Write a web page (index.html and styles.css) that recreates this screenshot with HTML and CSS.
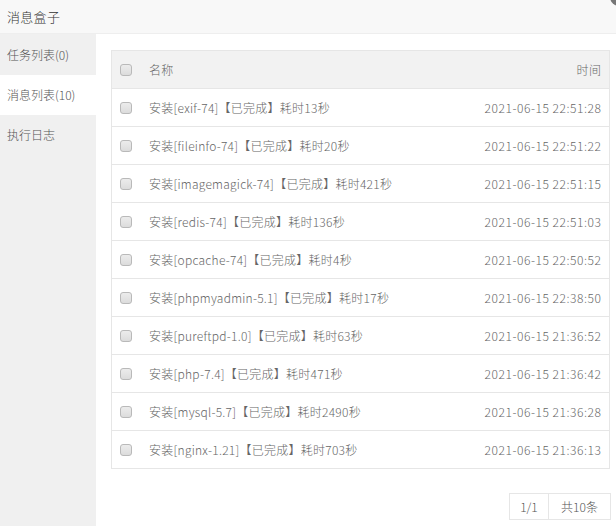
FILE: index.html
```html
<!DOCTYPE html>
<html lang="zh-CN">
<head>
<meta charset="utf-8">
<title>消息盒子</title>
<link rel="stylesheet" href="styles.css">
</head>
<body>
<div class="box">
  <div class="box-header">消息盒子</div>
  <span class="close-btn"></span>
  <div class="box-body">
    <ul class="side-nav">
      <li class="nav-item">任务列表(0)</li>
      <li class="nav-item active">消息列表(10)</li>
      <li class="nav-item">执行日志</li>
    </ul>
    <div class="content">
      <div class="table">
        <div class="row head">
          <span class="chk"></span>
          <span class="name">名称</span>
          <span class="time">时间</span>
        </div>
        <div class="row"><span class="chk"></span><span class="name">安装[exif-74]【已完成】耗时13秒</span><span class="time">2021-06-15 22:51:28</span></div>
        <div class="row"><span class="chk"></span><span class="name">安装[fileinfo-74]【已完成】耗时20秒</span><span class="time">2021-06-15 22:51:22</span></div>
        <div class="row"><span class="chk"></span><span class="name">安装[imagemagick-74]【已完成】耗时421秒</span><span class="time">2021-06-15 22:51:15</span></div>
        <div class="row"><span class="chk"></span><span class="name">安装[redis-74]【已完成】耗时136秒</span><span class="time">2021-06-15 22:51:03</span></div>
        <div class="row"><span class="chk"></span><span class="name">安装[opcache-74]【已完成】耗时4秒</span><span class="time">2021-06-15 22:50:52</span></div>
        <div class="row"><span class="chk"></span><span class="name">安装[phpmyadmin-5.1]【已完成】耗时17秒</span><span class="time">2021-06-15 22:38:50</span></div>
        <div class="row"><span class="chk"></span><span class="name">安装[pureftpd-1.0]【已完成】耗时63秒</span><span class="time">2021-06-15 21:36:52</span></div>
        <div class="row"><span class="chk"></span><span class="name">安装[php-7.4]【已完成】耗时471秒</span><span class="time">2021-06-15 21:36:42</span></div>
        <div class="row"><span class="chk"></span><span class="name">安装[mysql-5.7]【已完成】耗时2490秒</span><span class="time">2021-06-15 21:36:28</span></div>
        <div class="row"><span class="chk"></span><span class="name">安装[nginx-1.21]【已完成】耗时703秒</span><span class="time">2021-06-15 21:36:13</span></div>
      </div>
      <div class="pager">
        <span class="page-cell page-num">1/1</span>
        <span class="page-cell page-total">共10条</span>
      </div>
    </div>
  </div>
</div>
</body>
</html>
```

FILE: styles.css
```css
* { box-sizing: border-box; }
html, body {
  margin: 0;
  padding: 0;
  background: #fff;
  font-family: "Noto Sans CJK SC", "Noto Sans", sans-serif;
  font-size: 12px;
  font-weight: 300;
  color: #666;
}
.box {
  position: relative;
  width: 616px;
  height: 526px;
  overflow: hidden;
  display: flex;
  flex-direction: column;
}
.box-header {
  height: 34px;
  line-height: 33px;
  padding-left: 7px;
  font-size: 13px;
  letter-spacing: 0.3px;
  color: #333;
  background: #f8f8f8;
  border-bottom: 1px solid #eee;
}
.close-btn {
  position: absolute;
  right: -12px;
  top: -12px;
  width: 18px;
  height: 18px;
  border-radius: 50%;
  background: #777;
}
.box-body {
  flex: 1;
  display: flex;
}
.side-nav {
  list-style: none;
  margin: 0;
  padding: 0;
  width: 96px;
  background: #f0f0f0;
}
.nav-item {
  height: 40px;
  line-height: 40px;
  padding-left: 7px;
  color: #555;
}
.nav-item:first-child { height: 41px; line-height: 41px; }
.nav-item.active { background: #fff; }
.content {
  flex: 1;
  padding: 16px 6px 0 15px;
}
.table {
  border: 1px solid #e6e6e6;
}
.row {
  display: flex;
  align-items: center;
  height: 38px;
  border-top: 1px solid #e6e6e6;
  padding: 0 8px 0 8px;
}
.row:first-child { border-top: none; height: 37px; }
.row.head { background: #f2f2f2; }
.chk {
  width: 12px;
  height: 12px;
  border: 1px solid #b9b9b9;
  border-radius: 3px;
  background: linear-gradient(#ececec, #dcdcdc);
  flex: none;
}
.name {
  margin-left: 17px;
  flex: 1;
  white-space: nowrap;
  letter-spacing: 0.25px;
}
.time {
  white-space: nowrap;
  letter-spacing: 0.55px;
  margin-right: -0.55px;
}
.row.head .time { letter-spacing: 0.5px; }
.pager {
  display: flex;
  justify-content: flex-end;
  margin-top: 24px;
  margin-right: -1px;
}
.page-cell {
  height: 27px;
  line-height: 25px;
  border: 1px solid #e6e6e6;
  text-align: center;
  color: #555;
}
.page-num { width: 40px; }
.page-total { width: 62px; border-left: none; }
```
